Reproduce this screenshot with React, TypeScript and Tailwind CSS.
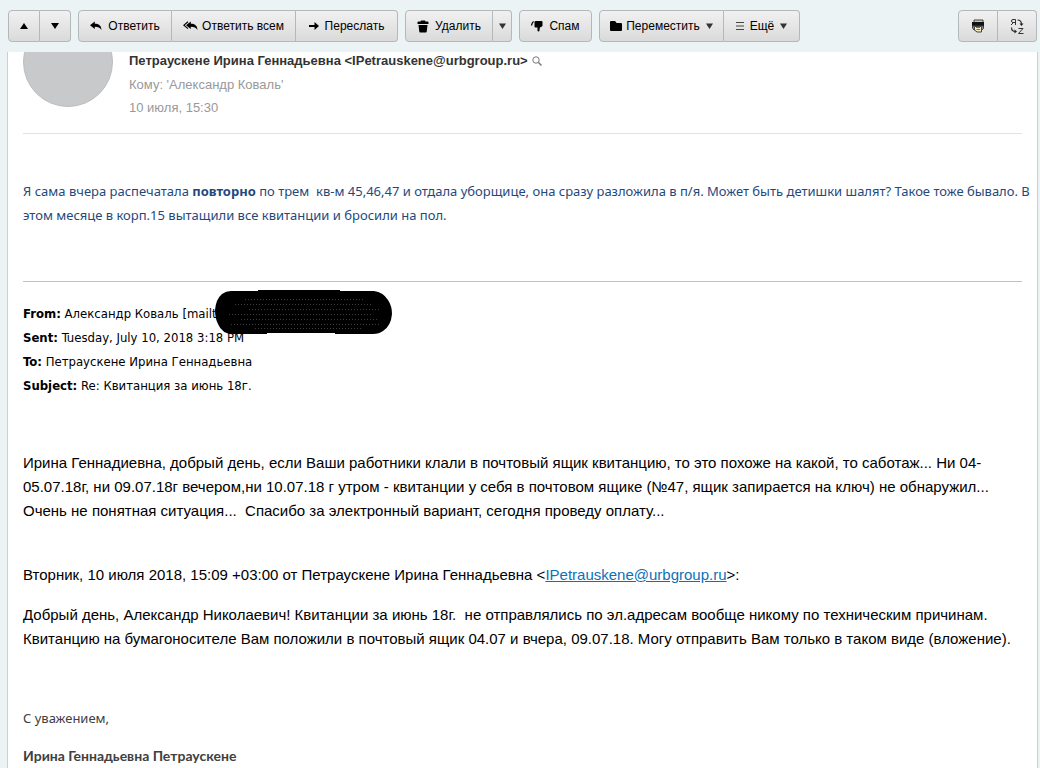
import type { ReactNode } from 'react';

interface ToolButtonProps {
  children: ReactNode;
  className: string;
  label?: string;
}

function ToolButton({ children, className, label }: ToolButtonProps) {
  return (
    <button
      type="button"
      aria-label={label}
      className={`flex h-8 items-center justify-center whitespace-nowrap border border-l-0 border-[#b4b8b9] bg-linear-to-b from-[#f1f1f1] to-[#dadada] text-xs text-black first:rounded-l-sm first:border-l last:rounded-r-sm ${className}`}
    >
      {children}
    </button>
  );
}

function Caret({ up = false }: { up?: boolean }) {
  return (
    <svg viewBox="0 0 8 6" className="h-1.5 w-2" aria-hidden="true">
      <path d={up ? 'M0 6 4 0l4 6z' : 'M0 0h8L4 6z'} />
    </svg>
  );
}

// Smaller triangle used on the drop-down buttons
function MenuCaret({ className = '' }: { className?: string }) {
  return (
    <svg viewBox="0 0 7 6" className={`h-1.5 w-[7px] ${className}`} aria-hidden="true">
      <path d="M0 .5h7L3.5 6z" fill="#333" />
    </svg>
  );
}

function ReplyIcon() {
  return (
    <svg viewBox="0 0 12 10" className="h-2.5 w-3" aria-hidden="true">
      <path d="M0 4.2 4.8.5v2.2c4 0 6.4 1.6 6.7 6.3C10 6.6 8.2 5.8 4.8 5.8V8z" />
    </svg>
  );
}

function ReplyAllIcon() {
  return (
    <svg viewBox="0 0 15 10" className="h-2.5 w-[15px]" aria-hidden="true">
      <path d="M3 4.2 7.8.5v2.2c4 0 6.4 1.6 6.7 6.3-1.5-2.4-3.3-3.2-6.7-3.2V8z" />
      <path d="M5 .8.8 4.2 5 7.7" fill="none" stroke="#000" strokeWidth="1.1" />
    </svg>
  );
}

function ForwardIcon() {
  return (
    <svg viewBox="0 0 10 8" className="h-2 w-2.5" aria-hidden="true">
      <path d="M0 3h5.5V0L10 4 5.5 8V5H0z" />
    </svg>
  );
}

function TrashIcon() {
  return (
    <svg viewBox="0 0 12 13" className="h-[13px] w-3" aria-hidden="true">
      <path d="M4 .5h4l.5 1h2q1 0 1 1V4H.5V2.5q0-1 1-1h2zM1.500 5h9l-.8 6.700q-.1.800-.9.800H3.200q-.8 0-.9-.8z" />
    </svg>
  );
}

function SpamIcon() {
  return (
    <svg viewBox="0 0 12 12" className="h-3 w-3" aria-hidden="true">
      <path d="M3.5 1.5Q4 1 5 1h5.5q1 0 1 1v3.5q0 1-1 1.3-1.5.4-1.8 1.5l-.2 2.2q-.1 1-1 1t-1-1V7.500h-2q-1 0-1-1z" />
      <path d="M2.6 1.5Q1 2.500.5 5.500" fill="none" stroke="#000" strokeWidth="1.300" />
    </svg>
  );
}

function FolderIcon() {
  return (
    <svg viewBox="0 0 12 10" className="h-2.5 w-3" aria-hidden="true">
      <path d="M0 1q0-1 1-1h3.5q.6 0 1 .6L6.600 2H11q1 0 1 1v6q0 1-1 1H1q-1 0-1-1z" />
    </svg>
  );
}

function PrinterIcon() {
  return (
    <svg viewBox="0 0 14 14" className="h-3.5 w-3.5" aria-hidden="true">
      <path d="M3 1h9v3H3z" fill="#c9c8b8" stroke="#444" />
      <path d="M1 3h12v4H1z" fill="#111" />
      <path d="M1.500 7h11v2.500L11 11H3L1.500 9z" fill="#8f8d7c" stroke="#444" />
      <path d="M3.500 7.500h7V13H6l-2.500-2z" fill="#f3e9c4" stroke="#444" />
      <path d="M5 8.500h4M5.500 10.500h3.500" stroke="#7d704b" />
    </svg>
  );
}

// Translation toggle: Я and Z joined by two curved arrows
function TranslateIcon() {
  return (
    <svg viewBox="0 0 14 15" className="h-[15px] w-3.5" fill="none" stroke="#333" aria-hidden="true">
      <path d="M5.500 6V.5H3Q1.500.5 1.500 2T3 3.500h2.500M3.500 3.500 1 6M8.500 9.500h4.500L8.500 14.500h5" />
      <path d="M7.500 1q4 0 4 4.500M1.500 8.500q0 4 4 4" strokeWidth="1.200" />
      <path d="M9.500 4.500h4l-2 2.500zM4.500 10.500l2.500 2-2.500 2z" fill="#222" stroke="none" />
    </svg>
  );
}

function Toolbar() {
  return (
    <div className="flex h-[52px] items-start gap-[7px] pt-2.5 pr-[3px] pl-2">
      <div className="flex">
        <ToolButton className="w-8" label="Предыдущее письмо"><Caret up /></ToolButton>
        <ToolButton className="w-[31px]" label="Следующее письмо"><Caret /></ToolButton>
      </div>
      <div className="flex">
        <ToolButton className="w-[94px] gap-1.5"><ReplyIcon />Ответить</ToolButton>
        <ToolButton className="w-[124px] gap-1"><ReplyAllIcon />Ответить всем</ToolButton>
        <ToolButton className="w-[102px] gap-1.5"><ForwardIcon />Переслать</ToolButton>
      </div>
      <div className="flex">
        <ToolButton className="w-[88px] gap-1.5"><TrashIcon />Удалить</ToolButton>
        <ToolButton className="w-[19px]" label="Варианты удаления"><MenuCaret /></ToolButton>
      </div>
      <div className="flex">
        <ToolButton className="w-[73px] gap-1.5"><SpamIcon />Спам</ToolButton>
      </div>
      <div className="flex">
        <ToolButton className="w-[125px] gap-1"><FolderIcon />Переместить<MenuCaret className="ml-0.5" /></ToolButton>
        <ToolButton className="w-[76px] gap-1.5">
          <svg viewBox="0 0 8 8" className="h-2 w-2" stroke="#444" aria-hidden="true">
            <path d="M0 .5h8M0 4h8M0 7.500h8" />
          </svg>
          Ещё
          <MenuCaret />
        </ToolButton>
      </div>
      <div className="ml-auto flex">
        <ToolButton className="w-10" label="Распечатать"><PrinterIcon /></ToolButton>
        <ToolButton className="w-[39px]" label="Перевести"><TranslateIcon /></ToolButton>
      </div>
    </div>
  );
}

function MessageHeader() {
  return (
    <header className="flex h-[82px] gap-4 overflow-hidden border-b border-[#dfe2e3]">
      <div className="-mt-[35px] h-[90px] w-[90px] shrink-0 rounded-full border border-[#bdbdbe] bg-[#c8c9ca]" />
      <div className="whitespace-nowrap text-[13px] leading-[23px] text-[#999]">
        <div className="mb-[3px] flex items-center gap-1 leading-[18px] text-[#333]">
          <h1 className="font-bold">Петраускене Ирина Геннадьевна &lt;IPetrauskene@urbgroup.ru&gt;</h1>
          <svg viewBox="0 0 10 10" className="h-2.5 w-2.5" fill="none" stroke="#777" aria-hidden="true">
            <circle cx="4" cy="4" r="3.200" />
            <path d="m6.500 6.500 3 3" strokeWidth="1.400" />
          </svg>
        </div>
        <p>Кому: 'Александр Коваль'</p>
        <p>10 июля, 15:30</p>
      </div>
    </header>
  );
}

// Marker strokes hiding the sender's address
function Redaction() {
  return (
    <svg viewBox="0 0 177 45" className="absolute -top-3 left-48 h-[45px] w-[177px]" aria-hidden="true">
      <path d="M16 1h27V0h82v1h34q9 1 14 9 4 6 4 14-1 12-9 17-4 3-10 3h-38v-1H52v1H18Q7 44 3 34 0 28 0 20 1 9 7 4q4-3 9-3z" />
      <g stroke="#3c3c3c" strokeWidth="1" strokeDasharray="1 2">
        <path d="M30 9.500h120M20 14.500h138M34 19.500h132M14 24.500h142M26 29.500h138M16 34.500h150M40 38.500h108" />
      </g>
    </svg>
  );
}

const quotedFields = [
  { name: 'From:', value: 'Александр Коваль [mailt' },
  { name: 'Sent:', value: 'Tuesday, July 10, 2018 3:18 PM' },
  { name: 'To:', value: 'Петраускене Ирина Геннадьевна' },
  { name: 'Subject:', value: 'Re: Квитанция за июнь 18г.' },
];

export default function App() {
  return (
    <div className="flex min-h-screen flex-col overflow-x-hidden bg-[#ebf3f5] font-['Liberation_Sans',Arial,sans-serif]">
      <Toolbar />
      <main className="mr-0.5 ml-[7px] flex-1 border-x border-[#c9d0d2] bg-white px-[15px]">
        <MessageHeader />

        <article className="whitespace-nowrap text-[15px] leading-6 text-black">
          <p className="mt-[45px] font-['Noto_Sans',sans-serif] text-[13px] text-[#1f497d]">
            Я сама вчера распечатала <b>повторно</b> по трем&nbsp; кв-м 45,46,47 и отдала уборщице, она сразу разложила в п/я. Может быть детишки шалят? Такое тоже бывало. В<br />
            этом месяце в корп.15 вытащили все квитанции и бросили на пол.
          </p>

          <div className="relative mt-[54px] border-t border-[#b5c4cf] pt-5 font-['DejaVu_Sans_Condensed','DejaVu_Sans',sans-serif] text-[13px]">
            {quotedFields.map((field) => (
              <p key={field.name}>
                <b>{field.name}</b> {field.value}
              </p>
            ))}
            <div className="absolute inset-x-0 top-5"><Redaction /></div>
          </div>

          <p className="mt-[53px]">
            Ирина Геннадиевна, добрый день, если Ваши работники клали в почтовый ящик квитанцию, то это похоже на какой, то саботаж... Ни 04-<br />
            05.07.18г, ни 09.07.18г вечером,ни 10.07.18 г утром - квитанции у себя в почтовом ящике (№47, ящик запирается на ключ) не обнаружил...<br />
            Очень не понятная ситуация...&nbsp; Спасибо за электронный вариант, сегодня проведу оплату...
          </p>

          <p className="mt-10">
            Вторник, 10 июля 2018, 15:09 +03:00 от Петраускене Ирина Геннадьевна &lt;
            <a href="mailto:IPetrauskene@urbgroup.ru" className="text-[#0c71b8] underline">IPetrauskene@urbgroup.ru</a>&gt;:
          </p>
          <p className="mt-4">
            Добрый день, Александр Николаевич! Квитанции за июнь 18г.&nbsp; не отправлялись по эл.адресам вообще никому по техническим причинам.<br />
            Квитанцию на бумагоносителе Вам положили в почтовый ящик 04.07 и вчера, 09.07.18. Могу отправить Вам только в таком виде (вложение).
          </p>

          <div className="mt-[55px] font-['Noto_Sans',sans-serif] text-[13px] text-[#404040]">
            <p>С уважением,</p>
            <p className="mt-3.5 font-[Lato,sans-serif] text-[14px] font-bold">Ирина Геннадьевна Петраускене</p>
          </div>
        </article>
      </main>
    </div>
  );
}
